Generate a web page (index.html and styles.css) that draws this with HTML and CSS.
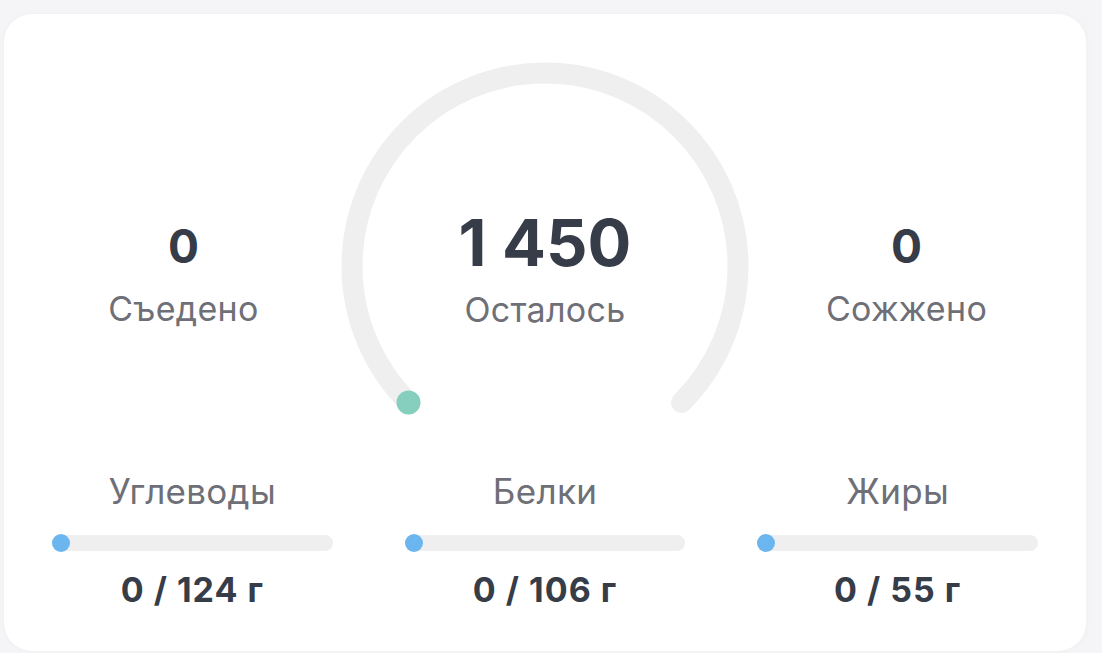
FILE: index.html
```html
<!DOCTYPE html>
<html lang="ru">
<head>
<meta charset="utf-8">
<title>Калории</title>
<link rel="stylesheet" href="styles.css">
</head>
<body>
<div class="card">
  <div class="top">
    <div class="stat side">
      <div class="num">0</div>
      <div class="label">Съедено</div>
    </div>
    <div class="gauge">
      <svg class="gauge-svg" width="424" height="366" viewBox="0 0 424 366">
        <path d="M 75.5 348.5 A 193 193 0 1 1 348.5 348.5" fill="none" stroke="#efefef" stroke-width="21" stroke-linecap="round"/>
        <circle cx="75.5" cy="348.5" r="12" fill="#86cfbf"/>
      </svg>
      <div class="stat center">
        <div class="num">1 450</div>
        <div class="label">Осталось</div>
      </div>
    </div>
    <div class="stat side">
      <div class="num">0</div>
      <div class="label">Сожжено</div>
    </div>
  </div>
  <div class="macros">
    <div class="macro">
      <div class="label">Углеводы</div>
      <div class="bar"><span class="dot"></span></div>
      <div class="mval">0 / 124 г</div>
    </div>
    <div class="macro">
      <div class="label">Белки</div>
      <div class="bar"><span class="dot"></span></div>
      <div class="mval">0 / 106 г</div>
    </div>
    <div class="macro">
      <div class="label">Жиры</div>
      <div class="bar"><span class="dot"></span></div>
      <div class="mval">0 / 55 г</div>
    </div>
  </div>
</div>
</body>
</html>
```

FILE: styles.css
```css
html, body {
  margin: 0;
  padding: 0;
  background: #f5f5f7;
  font-family: Inter, "Noto Sans", sans-serif;
}
body {
  width: 1102px;
  height: 653px;
  overflow: hidden;
}
.card {
  margin: 14px 16px 0 4px;
  height: 637px;
  box-sizing: border-box;
  background: #ffffff;
  border-radius: 28px;
  box-shadow: 0 0 6px rgba(0, 0, 0, 0.03);
  padding: 40px 30px 0 30px;
}
.top {
  display: grid;
  grid-template-columns: 1fr 424px 1fr;
  height: 366px;
}
.gauge {
  display: grid;
}
.gauge-svg {
  grid-area: 1 / 1;
  display: block;
}
.gauge .stat {
  grid-area: 1 / 1;
}
.stat {
  display: flex;
  flex-direction: column;
  align-items: center;
}
.num {
  color: #363c48;
  font-weight: 700;
  line-height: 1;
  letter-spacing: 0;
}
.label {
  color: #6e6f77;
  font-size: 34px;
  line-height: 40px;
  font-weight: 400;
  letter-spacing: 0.3px;
}
.center {
  padding-top: 156px;
}
.center .num {
  font-size: 65px;
}
.center .label {
  margin-top: 15px;
}
.side {
  padding-top: 169px;
}
.side .num {
  font-size: 46px;
}
.side .label {
  margin-top: 20px;
}
.macros {
  display: grid;
  grid-template-columns: 1fr 1fr 1fr;
  column-gap: 36px;
  margin-top: 51px;
}
.macro {
  display: flex;
  flex-direction: column;
  align-items: center;
  padding: 0 18px;
}
.macro .label {
  font-size: 35px;
}
.bar {
  position: relative;
  align-self: stretch;
  height: 16px;
  border-radius: 8px;
  background: #efefef;
  margin-top: 24px;
}
.dot {
  position: absolute;
  left: 0;
  top: -1px;
  width: 18px;
  height: 18px;
  border-radius: 50%;
  background: #6cb6f0;
}
.mval {
  margin-top: 19px;
  color: #363c48;
  font-size: 34px;
  font-weight: 700;
  line-height: 40px;
  letter-spacing: 1px;
}
```
